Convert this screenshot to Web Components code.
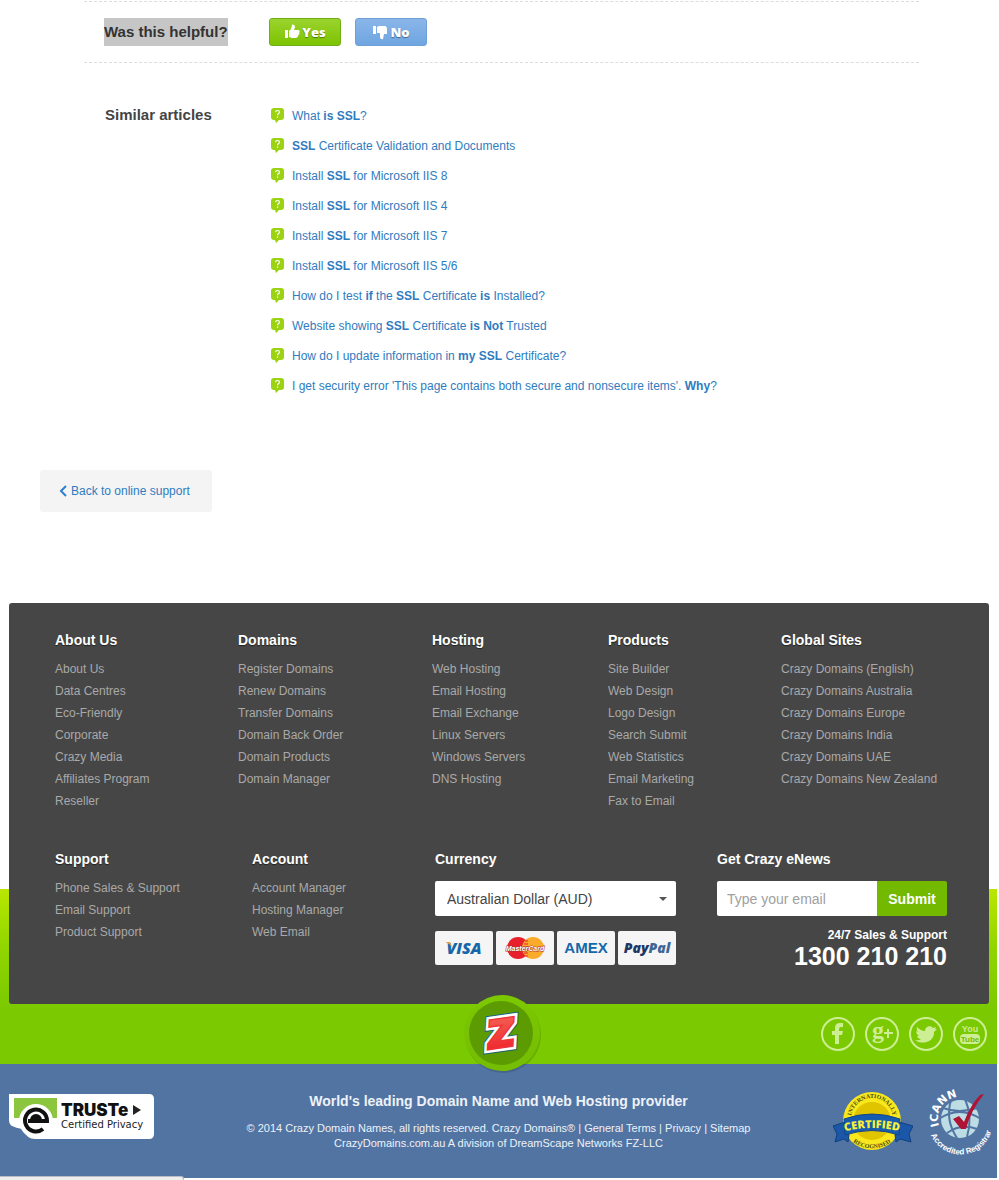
<!DOCTYPE html>
<html lang="en">
<head>
<meta charset="utf-8">
<meta name="viewport" content="width=device-width, initial-scale=1">
<title>Online Support</title>
<style>
body { margin: 0 2px 0 0; background: #fff; color: #444; font: 12px/22px "Liberation Sans", Arial, sans-serif; }
</style>
</head>
<body>
<main>
  <feedback-bar question="Was this helpful?"></feedback-bar>
  <similar-articles heading="Similar articles">
    <article-link>What <b>is SSL</b>?</article-link>
    <article-link><b>SSL</b> Certificate Validation and Documents</article-link>
    <article-link>Install <b>SSL</b> for Microsoft IIS 8</article-link>
    <article-link>Install <b>SSL</b> for Microsoft IIS 4</article-link>
    <article-link>Install <b>SSL</b> for Microsoft IIS 7</article-link>
    <article-link>Install <b>SSL</b> for Microsoft IIS 5/6</article-link>
    <article-link>How do I test <b>if</b> the <b>SSL</b> Certificate <b>is</b> Installed?</article-link>
    <article-link>Website showing <b>SSL</b> Certificate <b>is Not</b> Trusted</article-link>
    <article-link>How do I update information in <b>my SSL</b> Certificate?</article-link>
    <article-link>I get security error 'This page contains both secure and nonsecure items'. <b>Why</b>?</article-link>
  </similar-articles>
  <back-link>Back to online support</back-link>
</main>
<site-footer>
  <nav-column slot="top" heading="About Us"><a href="#">About Us</a><a href="#">Data Centres</a><a href="#">Eco-Friendly</a><a href="#">Corporate</a><a href="#">Crazy Media</a><a href="#">Affiliates Program</a><a href="#">Reseller</a></nav-column>
  <nav-column slot="top" heading="Domains"><a href="#">Register Domains</a><a href="#">Renew Domains</a><a href="#">Transfer Domains</a><a href="#">Domain Back Order</a><a href="#">Domain Products</a><a href="#">Domain Manager</a></nav-column>
  <nav-column slot="top" heading="Hosting"><a href="#">Web Hosting</a><a href="#">Email Hosting</a><a href="#">Email Exchange</a><a href="#">Linux Servers</a><a href="#">Windows Servers</a><a href="#">DNS Hosting</a></nav-column>
  <nav-column slot="top" heading="Products"><a href="#">Site Builder</a><a href="#">Web Design</a><a href="#">Logo Design</a><a href="#">Search Submit</a><a href="#">Web Statistics</a><a href="#">Email Marketing</a><a href="#">Fax to Email</a></nav-column>
  <nav-column slot="top" heading="Global Sites"><a href="#">Crazy Domains (English)</a><a href="#">Crazy Domains Australia</a><a href="#">Crazy Domains Europe</a><a href="#">Crazy Domains India</a><a href="#">Crazy Domains UAE</a><a href="#">Crazy Domains New Zealand</a></nav-column>
  <nav-column slot="bottom" heading="Support"><a href="#">Phone Sales &amp; Support</a><a href="#">Email Support</a><a href="#">Product Support</a></nav-column>
  <nav-column slot="bottom" heading="Account"><a href="#">Account Manager</a><a href="#">Hosting Manager</a><a href="#">Web Email</a></nav-column>
  <currency-picker slot="bottom"></currency-picker>
  <news-signup slot="bottom"></news-signup>
  <social-links slot="social"></social-links>
</site-footer>
<legal-bar></legal-bar>
<status-bubble></status-bubble>

<script>
const define = (name, html, setup) => {
  const template = document.createElement('template');
  template.innerHTML = html;
  customElements.define(name, class extends HTMLElement {
    constructor() {
      super();
      this.attachShadow({ mode: 'open' }).append(template.content.cloneNode(true));
    }
    connectedCallback() { if (setup) setup(this, this.shadowRoot); }
  });
};
const setHeading = (host, root) => { root.querySelector('h2,h3').textContent = host.getAttribute('heading'); };

define('feedback-bar', `
<style>
:host { display: flex; align-items: center; margin: 1px 78px 0 84px; padding: 16px 0 16px 20px; border: dashed #ddd; border-width: 1px 0; }
.label { width: 165px; }
h2 { display: inline-block; margin: 0; font-size: 15px; line-height: 28px; color: #333; background: #c6c6c6; white-space: nowrap; }
.choices { display: flex; gap: 14px; }
button { display: flex; align-items: center; justify-content: center; gap: 2px; box-sizing: border-box; width: 72px; height: 28px; padding: 0; border: 1px solid #6fae14; border-radius: 3px; background: linear-gradient(#9bd32f, #7cc400); color: #fff; font: 800 13px/16px "Open Sans", sans-serif; text-shadow: 0 1px 1px #0006; }
button.no { border-color: #6f9fd6; background: linear-gradient(#8ab6ea, #6fa5e0); }
svg { width: 16px; height: 16px; fill: #fff; }
</style>
<div class="label"><h2></h2></div>
<div class="choices">
  <button type="button"><svg viewBox="0 0 16 16"><path d="M1 6h3v8H1zM5 7l2-2 1-4c1-1 3 0 3 2l-1 3h4c2 0 2 2 1 3 1 1 0 2-1 2 1 1 0 2-1 2 0 1-1 1-2 1H8l-3-1z"/></svg>Yes</button>
  <button type="button" class="no"><svg viewBox="0 0 16 16"><path d="M1 2h3v8H1zM5 3l2-1h5c3 0 3 2 3 4v4h-3l-1 5c-2 1-3-1-3-2V9H5z"/></svg>No</button>
</div>`, (h, r) => { r.querySelector('h2').textContent = h.getAttribute('question'); });

define('similar-articles', `
<style>
:host { display: flex; margin: 37px 78px 0 105px; }
h2 { flex: none; width: 166px; margin: 0; font-size: 15px; line-height: 30px; color: #444; }
.list { display: grid; grid-auto-rows: 30px; padding-top: 1px; }
</style>
<h2></h2><div class="list"><slot></slot></div>`, setHeading);

define('article-link', `
<style>
:host { display: block; }
a { display: flex; align-items: center; gap: 8px; color: #2f7cc0; line-height: 30px; text-decoration: none; }
svg { flex: none; width: 13px; height: 17px; }
</style>
<a href="#"><svg viewBox="0 0 13 17" aria-hidden="true"><path d="M3 0h7q3 0 3 3v6q0 3-3 3H8l-3 3-1-3H3q-3 0-3-3V3q0-3 3-3z" fill="#9bd313"/><path d="M4.500 4.200q.3-1.700 2-1.700 2 0 2 1.600 0 1-1.100 1.600-.9.500-.9 1.500M6.500 8.500v1.300" fill="none" stroke="#fff" stroke-width="1.200"/></svg><span><slot></slot></span></a>`);

define('back-link', `
<style>
:host { display: block; padding: 69px 40px 91px; }
a { display: inline-flex; align-items: center; gap: 4px; box-sizing: border-box; height: 42px; padding: 0 22px 0 19px; border-radius: 3px; background: #f4f4f4; color: #2f7cc0; text-decoration: none; vertical-align: top; }
svg { width: 8px; height: 12px; fill: none; stroke: #2c7fd0; stroke-width: 2; }
</style>
<a href="#"><svg viewBox="0 0 8 12" aria-hidden="true"><path d="M7 1 2 6l5 5"/></svg><slot></slot></a>`);

define('site-footer', `
<style>
:host { display: block; position: relative; padding: 0 8px 60px 9px; background: linear-gradient(#b9e700, #90d500 60px, #7bc900 120px) no-repeat bottom / 100% 175px; }
.panel { display: grid; gap: 36px; padding: 26px 42px 35px 46px; border-radius: 3px; background: #464646; }
.row { display: grid; grid-template-columns: 183fr 194fr 176fr 173fr 166fr; }
.row.low { grid-template-columns: minmax(0, 197fr) minmax(0, 183fr) minmax(0, 282fr) minmax(0, 230fr); }
.social { position: absolute; right: 10px; bottom: 13px; }
.badge { position: absolute; left: 50%; bottom: -10px; margin-left: -36px; width: 80px; height: 80px; z-index: 1; }
</style>
<div class="panel">
  <div class="row"><slot name="top"></slot></div>
  <div class="row low"><slot name="bottom"></slot></div>
</div>
<svg class="badge" viewBox="0 0 80 80" role="img" aria-label="Crazy Domains">
  <defs><linearGradient id="red" x2="0" y2="1"><stop stop-color="#f4665a"/><stop offset="1" stop-color="#ee1c25"/></linearGradient><linearGradient id="rim" x2="0" y2="1"><stop stop-color="#7cc800"/><stop offset="1" stop-color="#74bd04"/></linearGradient></defs>
  <circle cx="40" cy="41" r="38" fill="#0002"/><circle cx="39" cy="39" r="38" fill="url(#rim)"/><circle cx="38" cy="39" r="32" fill="#5c9c02"/>
  <g transform="rotate(-8 38 39)" font-family="DejaVu Sans" font-weight="700" font-style="italic" font-size="38" text-anchor="middle" stroke-linejoin="miter">
    <text x="38" y="53" fill="#1d6675" stroke="#1d6675" stroke-width="10">Z</text>
    <text x="38" y="53" fill="#fff" stroke="#fff" stroke-width="8" aria-hidden="true">Z</text>
    <text x="38" y="53" fill="url(#red)" stroke="#f0353a" stroke-width="3" paint-order="stroke" aria-hidden="true">Z</text>
  </g>
</svg>
<div class="social"><slot name="social"></slot></div>`);

define('nav-column', `
<style>
:host { display: block; }
h3 { margin: 0 0 7px; font-size: 14px; line-height: 22px; color: #fff; text-shadow: 0 1px 1px #0008; }
::slotted(a) { display: block; color: #a9a9a9; text-decoration: none; }
</style>
<h3></h3><slot></slot>`, setHeading);

define('currency-picker', `
<style>
:host { display: block; margin-right: 41px; }
label { display: block; margin-bottom: 11px; font: bold 14px/22px "Liberation Sans", sans-serif; color: #fff; }
.field { display: grid; align-items: center; }
select, .field svg { grid-area: 1 / 1; }
select { appearance: none; box-sizing: border-box; width: 100%; height: 35px; padding: 0 12px; border: 0; border-radius: 2px; background: #fff; color: #444; font: 14px "Liberation Sans", sans-serif; }
.field svg { justify-self: end; margin-right: 9px; width: 8px; height: 4px; pointer-events: none; }
.cards { display: grid; grid-template-columns: repeat(4, 1fr); gap: 3px; margin-top: 15px; }
.cards svg { display: block; width: 100%; height: 34px; border-radius: 2px; background: #f5f5f5; }
</style>
<label for="currency">Currency</label>
<div class="field"><select id="currency"><option>Australian Dollar (AUD)</option></select><svg viewBox="0 0 8 4"><path d="M0 0h8L4 4z" fill="#555"/></svg></div>
<div class="cards">
  <svg viewBox="0 0 58 34"><text x="29" y="23" text-anchor="middle" font-family="Open Sans" font-size="16" font-weight="800" font-style="italic" fill="#1467a8">VISA</text><path d="M10 11h5l3 7q-2-5-8-7z" fill="#e8a33a"/></svg>
  <svg viewBox="0 0 58 34"><circle cx="22" cy="17" r="11" fill="#e8202c"/><circle cx="37" cy="17" r="11" fill="#fbab2c"/><path d="M29 10h3M28 13h4M27 16h5M27 19h5M28 22h4M29 25h3" stroke="#e8202c"/><text x="29" y="20" text-anchor="middle" font-family="Liberation Sans" font-size="7" font-weight="700" font-style="italic" fill="#fff" stroke="#a33" stroke-width="1" paint-order="stroke">MasterCard</text></svg>
  <svg viewBox="0 0 58 34"><text x="29" y="22" text-anchor="middle" font-family="Liberation Sans" font-size="15" font-weight="700" fill="#1467a8">AMEX</text></svg>
  <svg viewBox="0 0 58 34"><text x="29" y="22" text-anchor="middle" font-family="Open Sans" font-size="14" font-weight="800" font-style="italic" fill="#1e3764">Pay<tspan fill="#3d6695">Pal</tspan></text></svg>
</div>`);

define('news-signup', `
<style>
:host { display: block; }
label { display: block; margin-bottom: 11px; font: bold 14px/22px "Liberation Sans", sans-serif; color: #fff; }
form { display: flex; margin: 0; }
input { flex: 1; min-width: 0; box-sizing: border-box; height: 35px; padding: 0 10px; border: 0; border-radius: 2px 0 0 2px; background: #fff; font: 14px "Liberation Sans", sans-serif; }
input::placeholder { color: #a0a0a0; }
button { width: 70px; height: 35px; padding: 0; border: 0; border-radius: 0 2px 2px 0; background: #72b900; color: #fff; font: bold 14px "Liberation Sans", sans-serif; }
p { margin: 12px 0 0; text-align: right; color: #fff; font-weight: bold; line-height: 15px; }
strong { display: block; font-size: 25px; line-height: 26px; }
</style>
<label for="email">Get Crazy eNews</label>
<form><input id="email" type="email" placeholder="Type your email"><button type="button">Submit</button></form>
<p>24/7 Sales &amp; Support<strong>1300 210 210</strong></p>`);

define('social-links', `
<style>
:host { display: flex; gap: 10px; }
a { display: block; width: 34px; height: 34px; }
svg { display: block; width: 34px; height: 34px; fill: #cdee95; }
circle { fill: none; stroke: #cdee95; stroke-width: 2; }
</style>
<a href="#" aria-label="Facebook"><svg viewBox="0 0 34 34"><circle cx="17" cy="17" r="16"/><path d="M14 27V18h-3v-4h3v-3q0-5 5-5h3v4h-2q-2 0-2 2v2h4l-1 4h-3v9z"/></svg></a>
<a href="#" aria-label="Google Plus"><svg viewBox="0 0 34 34"><circle cx="17" cy="17" r="16"/><text x="7" y="21" font-family="Liberation Serif" font-size="24" font-weight="700">g</text><path d="M19 15h3v-3h2v3h4v2h-4v4h-2v-4h-3z"/></svg></a>
<a href="#" aria-label="Twitter"><svg viewBox="0 0 34 34"><circle cx="17" cy="17" r="16"/><path d="M6 23q4 1 6-1-3 0-4-3h2q-3-2-3-5l2 1q-2-2-1-5 4 4 8 4c0-5 6-6 8-3l3-1-1 2h2l-3 3c1 9-11 14-19 8z"/></svg></a>
<a href="#" aria-label="YouTube"><svg viewBox="0 0 34 34"><circle cx="17" cy="17" r="16"/><text x="17" y="15" text-anchor="middle" font-family="Liberation Sans Narrow, Liberation Sans" font-size="9" font-weight="700">You</text><rect x="7" y="17" width="20" height="10" rx="4"/><text x="17" y="25" text-anchor="middle" font-family="Liberation Sans Narrow, Liberation Sans" font-size="8" font-weight="700" fill="#72ba08">Tube</text></svg></a>`);

define('legal-bar', `
<style>
:host { display: grid; grid-template-columns: 1fr auto 1fr; padding: 26px 4px 22px; background: #5174a3; color: #eef2f8; }
.truste { margin: 4px 0 0 5px; width: 146px; height: 48px; }
.copy { text-align: center; font-size: 11px; line-height: 15px; }
h2 { margin: 0 0 9px; font-size: 14px; line-height: 22px; }
p { margin: 0; }
a { color: inherit; text-decoration: none; }
.seals { display: flex; justify-content: flex-end; gap: 4px; }
.seals svg { flex: none; width: 80px; height: 66px; }
.seals svg.icann { width: 80px; height: 74px; margin: -4px -2px; }
</style>
<svg class="truste" viewBox="0 0 146 48" role="img" aria-label="TRUSTe Certified Privacy">
  <path d="M0 4h140q5 0 5 5v35q0 5-5 5H26q-8 0-13-10-6-1-10-3-3-2-3-6z" transform="translate(0 -4)" fill="#fff"/>
  <path d="M5 4h43v20H5z" fill="#8cc63f"/><circle cx="27" cy="27" r="17" fill="#fff"/>
  <path d="M19 27h19A11 11 0 1 0 34 35" fill="none" stroke="#111" stroke-width="4"/><path d="M21 26a6 6 0 0 1 12 0z" fill="#111"/>
  <text x="52" y="22" font-family="Inter" font-size="17" font-weight="900" fill="#111">TRUSTe</text><path d="m124 11 8 5-8 5z" fill="#222"/>
  <text x="52" y="34" font-family="DejaVu Sans" font-size="10" fill="#222">Certified Privacy</text>
</svg>
<div class="copy">
  <h2>World's leading Domain Name and Web Hosting provider</h2>
  <p>© 2014 Crazy Domain Names, all rights reserved. Crazy Domains® | <a href="#">General Terms</a> | <a href="#">Privacy</a> | <a href="#">Sitemap</a></p>
  <p>CrazyDomains.com.au A division of DreamScape Networks FZ-LLC</p>
</div>
<div class="seals">
  <svg viewBox="0 0 80 66" role="img" aria-label="Certified">
    <defs><path id="up" d="M18 29a21 21 0 0 1 42 0"/><path id="down" d="M18 50a26 20 0 0 0 42 0"/><path id="mid" d="M9 42q30-8 60 0"/></defs>
    <circle cx="39" cy="31" r="29" fill="#f8e71c"/><circle cx="39" cy="31" r="19" fill="#e0c400"/>
    <path d="m0 36 12-4 4 13-1 7-4-3-9 3 2-8zM80 36l-14-4-4 13 1 7 4-3 11 3-2-8z" fill="#1b57a8" stroke="#123f80"/>
    <path d="M11 29q28-10 56 0l-1 16q-27-9-54 0z" fill="#155bb0" stroke="#124785"/>
    <g font-family="Liberation Serif" font-size="6" font-weight="700" fill="#4d4a0c" text-anchor="middle"><text><textPath href="#up" startOffset="50%">INTERNATIONALLY</textPath></text><text><textPath href="#down" startOffset="50%">RECOGNISED</textPath></text></g>
    <text font-family="Open Sans" font-size="11" font-weight="800" fill="#f8f03a" text-anchor="middle"><textPath href="#mid" startOffset="50%">CERTIFIED</textPath></text>
  </svg>
  <svg class="icann" viewBox="-6 -4 80 74" role="img" aria-label="ICANN Accredited Registrar">
    <defs><path id="icann" d="M18 36A22 22 0 0 1 55 14"/><path id="accr" d="M10 45A31 31 0 0 0 69 20"/></defs>
    <circle cx="39" cy="29" r="19" fill="#bcdde4"/><g fill="none" stroke="#5174a3" stroke-width="2"><path d="M18 29q20-14 42 0M26 43q14-10 30-4M30 10q-6 20 6 38M44 9q8 18 2 38M22 18q16 6 34 0"/></g>
    <path d="m32 29 6-3 5 6Q50 14 59 5l4-1Q50 20 45 39h-5z" fill="#b01435"/>
    <text fill="#fff" font-family="DejaVu Sans" font-size="11" font-weight="700"><textPath href="#icann">ICANN</textPath></text>
    <text fill="#fff" font-family="Liberation Sans" font-size="8" font-weight="700"><textPath href="#accr">Accredited Registrar</textPath></text>
  </svg>
</div>`);

define('status-bubble', `
<style>:host { display: block; position: fixed; left: 0; bottom: 0; width: 184px; height: 4px; border: solid #b8bcc4; border-width: 1px 1px 0 0; border-radius: 0 3px 0 0; box-sizing: border-box; background: #eee; }</style>`);
</script>
</body>
</html>
